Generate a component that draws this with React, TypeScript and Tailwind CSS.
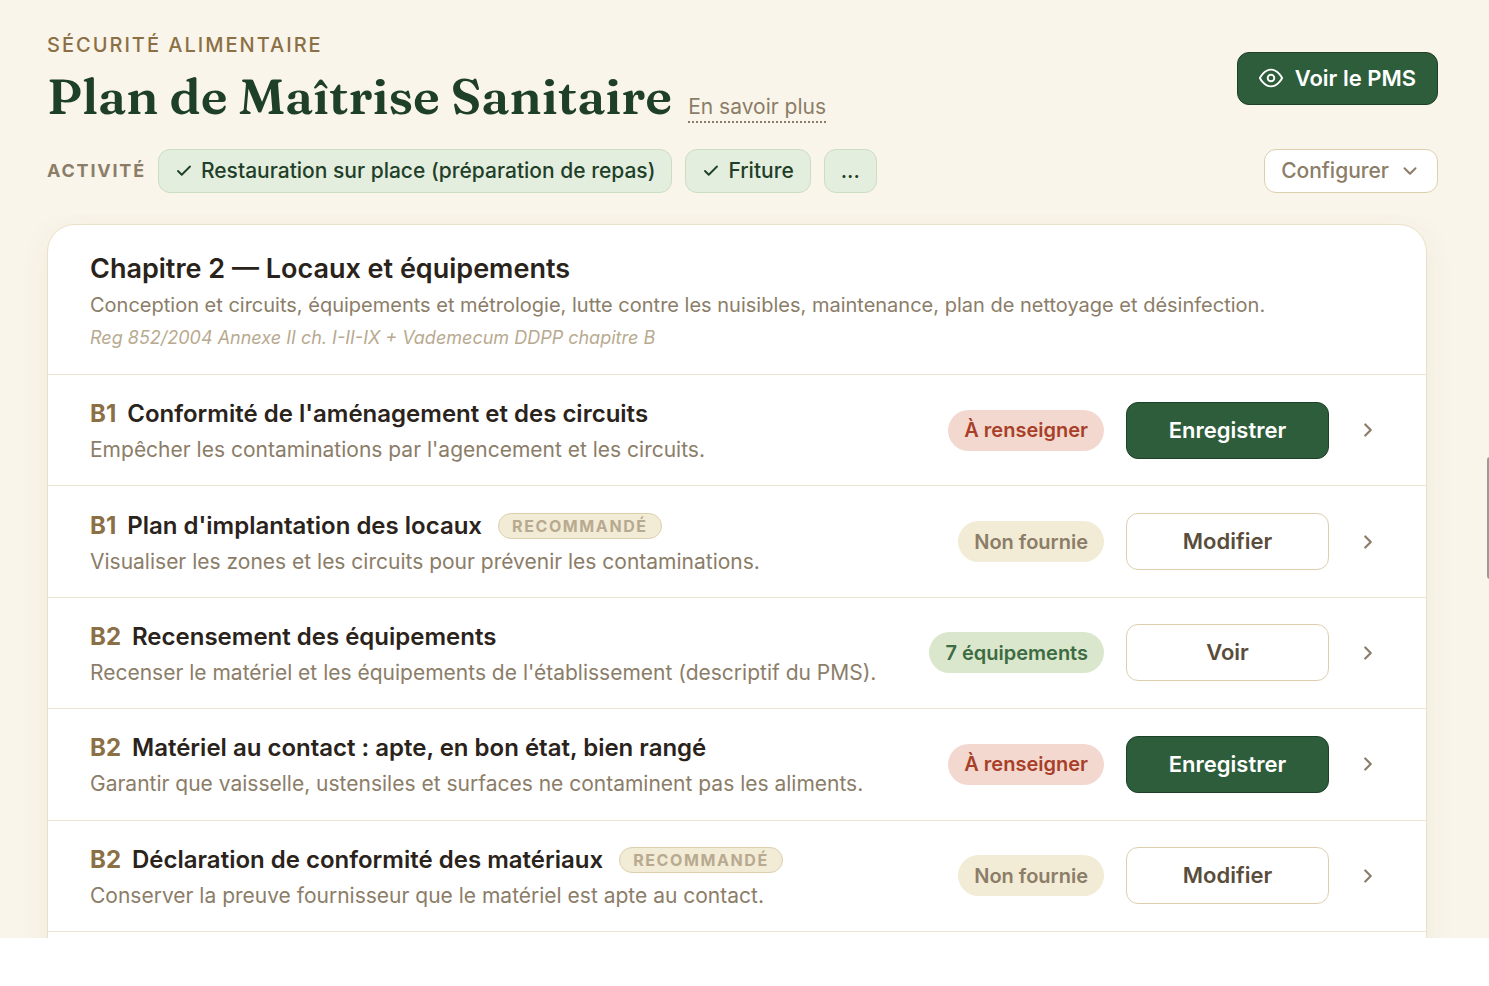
import { Check, ChevronDown, ChevronRight } from "lucide-react";

type Status = "todo" | "missing" | "done";

interface Item {
   code: string;
   title: string;
   desc: string;
   recommended?: boolean;
   status: Status;
   label: string;
   action: string;
}

const items: Item[] = [
   { code: "B1", title: "Conformité de l'aménagement et des circuits", desc: "Empêcher les contaminations par l'agencement et les circuits.", status: "todo", label: "À renseigner", action: "Enregistrer" },
   { code: "B1", title: "Plan d'implantation des locaux", desc: "Visualiser les zones et les circuits pour prévenir les contaminations.", recommended: true, status: "missing", label: "Non fournie", action: "Modifier" },
   { code: "B2", title: "Recensement des équipements", desc: "Recenser le matériel et les équipements de l'établissement (descriptif du PMS).", status: "done", label: "7 équipements", action: "Voir" },
   { code: "B2", title: "Matériel au contact : apte, en bon état, bien rangé", desc: "Garantir que vaisselle, ustensiles et surfaces ne contaminent pas les aliments.", status: "todo", label: "À renseigner", action: "Enregistrer" },
   { code: "B2", title: "Déclaration de conformité des matériaux", desc: "Conserver la preuve fournisseur que le matériel est apte au contact.", recommended: true, status: "missing", label: "Non fournie", action: "Modifier" },
];

const statusStyles: Record<Status, string> = {
   todo: "bg-[#f3d8d0] text-[#a83f28]",
   missing: "bg-[#f2ebd5] text-[#8b7d68]",
   done: "bg-[#dae7cd] text-[#3d6b42]",
};

function EyeIcon() {
   return (
      <svg viewBox="0 0 24 24" className="h-6 w-6" fill="none" stroke="currentColor" strokeWidth="1.9" strokeLinejoin="round" aria-hidden="true">
         <path d="M.9 12S4.9 3.6 12 3.6 23.1 12 23.1 12 19.1 20.4 12 20.4.9 12 .9 12Z" />
         <circle cx="12" cy="12" r="3.3" />
      </svg>
   );
}

function Chip({ children, checked }: { children: string; checked?: boolean }) {
   return (
      <button type="button" className="flex h-11 items-center gap-2 rounded-xl border border-[#cbdec0] bg-[#e4eedf] px-4 text-[21px] font-medium text-[#1f4028]">
         {checked && <Check className="h-[18px] w-[18px]" strokeWidth={2.5} />}
         {children}
      </button>
   );
}

function ItemRow({ item }: { item: Item }) {
   return (
      <li className="flex items-center border-b border-[#ebe4d0] pr-[47px] pl-[42px]">
         <div className="min-w-0 flex-1 pt-1">
            <div className="flex items-center">
               <h3 className="text-2xl leading-8 font-semibold text-[#2a231b]">
                  <span className="mr-[11px] font-bold text-[#8b6f45]">{item.code}</span>
                  {item.title}
               </h3>
               {item.recommended && (
                  <span className="ml-4 flex h-[26px] items-center rounded-full border border-[#dccfae] bg-[#f2ebd5] px-[13px] text-base font-bold tracking-widest text-[#b8aa90] uppercase">
                     Recommandé
                  </span>
               )}
            </div>
            <p className="mt-1 text-[21px] leading-8 text-[#8b7d68]">{item.desc}</p>
         </div>
         <span className={`flex h-[41px] items-center rounded-full px-4 text-xl font-semibold ${statusStyles[item.status]}`}>{item.label}</span>
         <button
            type="button"
            className={`ml-[22px] h-[57px] w-[203px] rounded-xl border text-[22px] font-semibold ${
               item.action === "Enregistrer" ? "border-[#1f4028] bg-[#2e5d3b] text-white" : "border-[#dccfae] bg-white text-[#5a4d3c]"
            }`}
         >
            {item.action}
         </button>
         <button type="button" aria-label="Ouvrir" className="ml-7 text-[#8b7d68]">
            <ChevronRight className="h-[22px] w-[22px]" strokeWidth={2.4} />
         </button>
      </li>
   );
}

export default function App() {
   return (
      <div className="min-h-screen bg-white font-['Inter',sans-serif]">
         <div className="relative flex h-[calc(100vh-48px)] flex-col overflow-hidden bg-[#faf5ea]">
            <header className="flex items-center justify-between pt-[29px] pr-[51px] pl-[47px]">
               <div>
                  <p className="text-xl leading-8 font-medium tracking-widest text-[#8b6f45] uppercase">Sécurité alimentaire</p>
                  <div className="flex items-baseline gap-4">
                     <h1 className="font-['Fraunces','Liberation_Serif',serif] text-[50px] leading-[70px] font-semibold text-[#1f4028]">Plan de Maîtrise Sanitaire</h1>
                     <a href="#" className="border-b-2 border-dotted border-[#8b7d68] text-[21px] leading-7 text-[#8b7d68]">
                        En savoir plus
                     </a>
                  </div>
               </div>
               <button type="button" className="mb-1 flex h-[53px] items-center gap-3 rounded-xl border border-[#1f4028] bg-[#2e5d3b] px-[21px] text-[22px] font-semibold text-white">
                  <EyeIcon />
                  Voir le PMS
               </button>
            </header>

            <div className="mt-[18px] flex items-center pr-[51px] pl-[47px]">
               <span className="mr-3 text-lg font-bold tracking-widest text-[#8b7d68] uppercase">Activité</span>
               <div className="flex gap-[13px]">
                  <Chip checked>Restauration sur place (préparation de repas)</Chip>
                  <Chip checked>Friture</Chip>
                  <Chip>...</Chip>
               </div>
               <button type="button" className="ml-auto flex h-11 items-center gap-2.5 rounded-xl border border-[#dccfae] bg-white px-4 text-[21px] font-medium text-[#8b7d68]">
                  Configurer
                  <ChevronDown className="h-[22px] w-[22px]" strokeWidth={2.2} />
               </button>
            </div>

            <main className="mt-[22px] min-h-0 flex-1 overflow-hidden pt-[9px] pr-[62px] pl-[47px]">
               <section className="rounded-[28px] border border-[#ebe1c8] bg-white pb-10 shadow-[0_6px_32px_rgba(60,50,30,0.06)]">
                  <div className="border-b border-[#ebe4d0] px-[42px] pt-[26px] pb-[19px]">
                     <h2 className="text-[27px] leading-9 font-semibold text-[#2a231b]">Chapitre 2 — Locaux et équipements</h2>
                     <p className="mt-0.5 text-xl leading-8 text-[#8b7d68]">
                        Conception et circuits, équipements et métrologie, lutte contre les nuisibles, maintenance, plan de nettoyage et désinfection.
                     </p>
                     <p className="text-lg leading-[34px] text-[#b8aa90] italic">Reg 852/2004 Annexe II ch. I-II-IX + Vademecum DDPP chapitre B</p>
                  </div>
                  <ul className="grid min-h-[557px] auto-rows-fr">
                     {items.map((item) => (
                        <ItemRow key={item.title} item={item} />
                     ))}
                  </ul>
               </section>
            </main>

            {/* scrollbar thumb peeking from the window edge */}
            <div className="absolute top-[457px] -right-1 h-[122px] w-1.5 rounded-full bg-[#9a9a98]" />
         </div>
      </div>
   );
}
